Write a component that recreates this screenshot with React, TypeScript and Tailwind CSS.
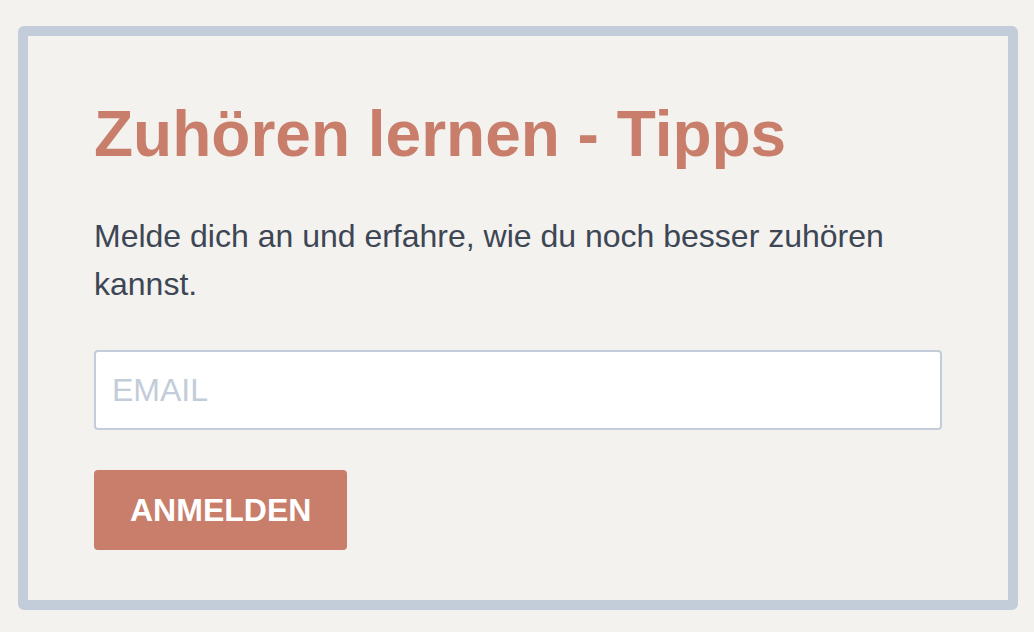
export default function App() {
  return (
    <div className="min-h-[632px] bg-[#f3f2ee] pt-[26px] pb-[22px] font-['Liberation_Sans',Arial,sans-serif]">
      <div className="ml-[18px] w-[1000px] rounded-[6px] border-[10px] border-[#c2cdd9] px-[66px] pt-[66px] pb-[50px]">
        <h1 className="text-[64px] font-bold leading-none text-[#c87e6a]">Zuhören lernen - Tipps</h1>
        <p className="mt-[46px] text-[32px] leading-[48px] text-[#3d4655]">
          Melde dich an und erfahre, wie du noch besser zuhören kannst.
        </p>
        <form className="mt-[42px] flex flex-col items-start gap-[40px]" onSubmit={(e) => e.preventDefault()}>
          <input
            type="email"
            placeholder="EMAIL"
            className="h-[80px] w-full rounded-[4px] border-2 border-[#c2cdd9] bg-white px-[16px] text-[32px] text-[#3d4655] outline-none placeholder:text-[#c2cdd9]"
          />
          <button
            type="submit"
            className="h-[80px] rounded-[4px] bg-[#c87e6a] px-[36px] text-[32px] font-bold text-white"
          >
            ANMELDEN
          </button>
        </form>
      </div>
    </div>
  );
}
